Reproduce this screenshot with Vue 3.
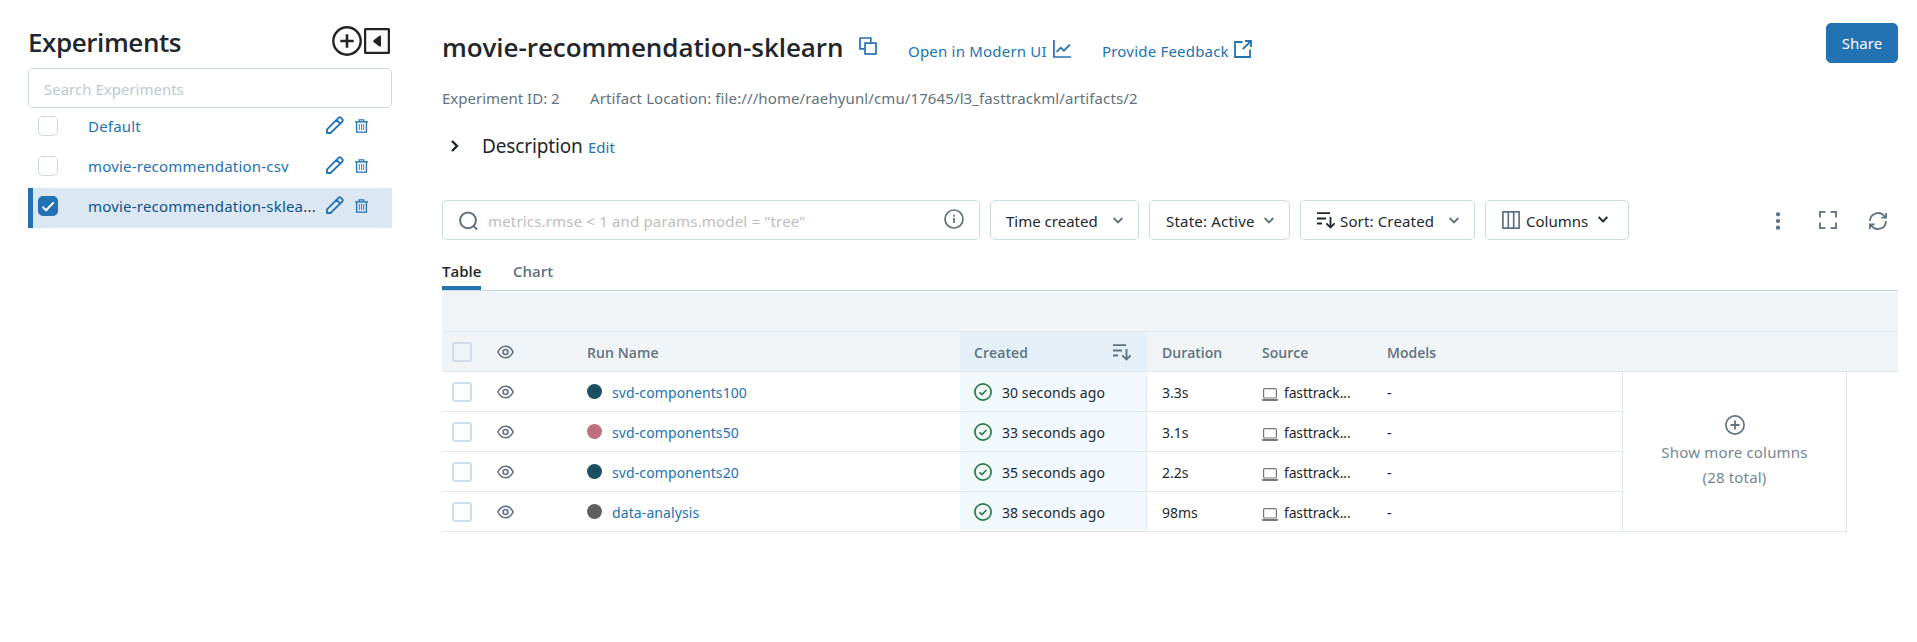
<script setup>
import { ref } from 'vue'

const experiments = ref([
  { name: 'Default', active: false },
  { name: 'movie-recommendation-csv', active: false },
  { name: 'movie-recommendation-sklea', active: true },
])

const runs = [
  { name: 'svd-components100', color: '#1b5063', created: '30 seconds ago', duration: '3.3s' },
  { name: 'svd-components50', color: '#bf6e80', created: '33 seconds ago', duration: '3.1s' },
  { name: 'svd-components20', color: '#1b5063', created: '35 seconds ago', duration: '2.2s' },
  { name: 'data-analysis', color: '#606060', created: '38 seconds ago', duration: '98ms' },
]
</script>

<template>
  <div class="page">
    <aside class="sidebar">
      <header class="side-head">
        <h2>Experiments</h2>
        <svg class="add" width="30" height="30" viewBox="0 0 30 30" fill="none" stroke="#232323">
          <circle cx="15" cy="15" r="13.7" stroke-width="2.4" />
          <path d="M15 8.3v13.4M8.3 15h13.4" stroke-width="2.6" />
        </svg>
        <svg class="collapse" width="26" height="26" viewBox="0 0 26 26">
          <rect x="1.1" y="1.1" width="23.8" height="23.8" rx=".6" fill="none" stroke="#232323" stroke-width="2.3" />
          <path d="M9.6 12.2l5.400-4.300q2-1 2 1v8.400q0 2-2 1l-5.400-4.300q-1-.9 0-1.800z" fill="#232323" />
        </svg>
      </header>
      <div class="side-search">Search Experiments</div>
      <ul class="exp-list">
        <li v-for="e in experiments" :key="e.name" :class="{ active: e.active }">
          <span class="box" :class="{ on: e.active }">
            <svg v-if="e.active" width="20" height="20" viewBox="0 0 20 20" fill="none" stroke="#fff" stroke-width="2"><path d="M4.500 10.800l3.600 3.500 7.600-7.900" /></svg>
          </span>
          <span class="exp-name"><span>{{ e.name }}</span><i v-if="e.active">...</i></span>
          <svg class="pencil" width="18" height="18" viewBox="0 0 18 18" fill="none" stroke="#2272b4" stroke-width="1.800" stroke-linejoin="round">
            <path d="M1 17v-3.600L12.700 1.600q1-1 2 0l1.700 1.700q1 1 0 2L4.600 17zM10.500 3.900l3.600 3.600" />
          </svg>
          <svg class="trash" width="13" height="14" viewBox="0 0 13 14" fill="none" stroke="#2272b4">
            <path d="M0 2.900h13" stroke-width="1.400" /><path d="M4.200 2.500V.8h4.600v1.700M1.600 3.300v9.900h9.800V3.300" stroke-width="1.300" />
            <path d="M4.300 5v6M6.500 5v6M8.700 5v6" stroke-width=".9" />
          </svg>
        </li>
      </ul>
    </aside>

    <main class="main">
      <header class="head">
        <h1>movie-recommendation-sklearn</h1>
        <svg class="copy" width="18" height="18" viewBox="0 0 18 18" fill="none" stroke="#2272b4" stroke-width="1.700">
          <path d="M5.500 11.800H1V1h10.800v4.500" /><rect x="6.100" y="6.100" width="10.900" height="10.900" />
        </svg>
        <a class="modern">Open in Modern UI</a>
        <svg class="chart" width="18" height="18" viewBox="0 0 18 18" fill="none" stroke="#2272b4" stroke-width="1.700">
          <path d="M.9 0v17H18M3.600 11.800l4.200-4.200 3.100 3.100 6-6" />
        </svg>
        <a class="feedback">Provide Feedback</a>
        <svg class="ext" width="18" height="18" viewBox="0 0 18 18" fill="none" stroke="#2272b4" stroke-width="1.800">
          <path d="M8.500 2H1v15h15V9.500M11 1h6v6M17 1L8.800 9.200" />
        </svg>
        <button class="share">Share</button>
      </header>
      <div class="meta"><span class="eid">Experiment ID: 2</span><span class="loc">Artifact Location: file:///home/raehyunl/cmu/17645/l3_fasttrackml/artifacts/2</span></div>
      <div class="desc">
        <svg width="8" height="12" viewBox="0 0 8 12" fill="none" stroke="#1f272d" stroke-width="2.400"><path d="M1 1l5 5-5 5" /></svg>
        <span class="dlabel">Description</span><a>Edit</a>
      </div>

      <div class="tools">
        <div class="query">
          <svg width="19" height="20" viewBox="0 0 19 20" fill="none" stroke="#5f7281" stroke-width="2"><circle cx="9" cy="9.300" r="7.900" /><path d="M14 14.500l4 4" /></svg>
          <span>metrics.rmse &lt; 1 and params.model = "tree"</span>
          <svg class="info" width="20" height="20" viewBox="0 0 20 20" fill="none" stroke="#5f7281" stroke-width="1.700"><circle cx="10" cy="10" r="9" /><path d="M10 9v5M10 5.800v1.900" /></svg>
        </div>
        <button class="t1"><span>Time created</span><svg class="chev" viewBox="0 0 10 7"><path d="M.7 1l4.300 4.300L9.300 1" /></svg></button>
        <button class="t2"><span>State: Active</span><svg class="chev" viewBox="0 0 10 7"><path d="M.7 1l4.300 4.300L9.300 1" /></svg></button>
        <button class="t3">
          <svg class="sort" viewBox="0 0 18 17"><path d="M0 1.200h13M0 6.500h9M0 11.500h5M13.500 5v10.500M9.300 11.300l4.200 4.200 4.200-4.200" /></svg>
          <span>Sort: Created</span><svg class="chev" viewBox="0 0 10 7"><path d="M.7 1l4.300 4.300L9.300 1" /></svg>
        </button>
        <button class="t4">
          <svg class="cols" width="18" height="18" viewBox="0 0 18 18" fill="none" stroke="#5f7281" stroke-width="1.700"><path d="M.9.9h16.200v16.200H.9zM6.300 1v16M11.700 1v16" /></svg>
          <span>Columns</span><svg class="chev dark" viewBox="0 0 10 7"><path d="M.7 1l4.300 4.300L9.300 1" /></svg>
        </button>
        <div class="right-icons">
          <svg width="4" height="18" viewBox="0 0 4 18" fill="#5f7281"><circle cx="2" cy="2.300" r="2.100" /><circle cx="2" cy="9" r="2.100" /><circle cx="2" cy="15.700" r="2.100" /></svg>
          <svg width="18" height="18" viewBox="0 0 18 18" fill="none" stroke="#5f7281" stroke-width="1.800"><path d="M.9 6.500V.9h5.600M11.500.9h5.600v5.600M17.100 11.500v5.600h-5.600M6.500 17.100H.9v-5.600" /></svg>
          <svg class="sync" width="18" height="18" viewBox="0 0 18 18" fill="none" stroke="#5f7281" stroke-width="1.800"><path d="M1 9a8 8 0 0 1 15-3.800M17.100 1v4.700h-4.700M17 9A8 8 0 0 1 2 12.800M.9 17v-4.700h4.700" /></svg>
        </div>
      </div>

      <nav class="tabs"><a class="sel">Table</a><a class="chart-tab">Chart</a></nav>

      <section class="grid">
        <div class="band"></div>
        <div class="row hrow">
          <div class="c-check"><span class="cb"></span></div>
          <div class="c-eye"><svg class="eye" viewBox="0 0 18 14"><path d="M.9 7Q4 .9 9 .9T17.100 7Q14 13.100 9 13.100T.9 7z" /><circle cx="9" cy="7" r="2.600" /></svg></div>
          <div class="c-name"><span class="h-run">Run Name</span></div>
          <div class="c-created"><span class="h-created">Created</span><svg class="sort" viewBox="0 0 18 17"><path d="M0 1.200h13M0 6.500h9M0 11.500h5M13.500 5v10.500M9.300 11.300l4.200 4.200 4.200-4.200" /></svg></div>
          <div class="c-dur">Duration</div>
          <div class="c-src"><span>Source</span></div>
          <div class="c-mod">Models</div>
        </div>
        <div class="body">
          <div class="rows">
            <div v-for="r in runs" :key="r.name" class="row">
              <div class="c-check"><span class="cb"></span></div>
              <div class="c-eye"><svg class="eye" viewBox="0 0 18 14"><path d="M.9 7Q4 .9 9 .9T17.100 7Q14 13.100 9 13.100T.9 7z" /><circle cx="9" cy="7" r="2.600" /></svg></div>
              <div class="c-name"><span class="dot" :style="{ background: r.color }"></span><a>{{ r.name }}</a></div>
              <div class="c-created">
                <svg class="ok" width="18" height="18" viewBox="0 0 18 18" fill="none" stroke="#277c43" stroke-width="1.700"><circle cx="9" cy="9" r="8.100" /><path d="M5.500 9.300l2.400 2.300 4.600-4.600" /></svg>
                <span>{{ r.created }}</span>
              </div>
              <div class="c-dur">{{ r.duration }}</div>
              <div class="c-src">
                <svg width="16" height="13" viewBox="0 0 16 13"><rect x="1.600" y=".6" width="12.800" height="9.400" rx="1" fill="none" stroke="#777" stroke-width="1.200" /><path d="M0 11h16v1q0 1-1 1H1q-1 0-1-1z" fill="#777" /></svg>
                <span class="src-name">fasttrack...</span>
              </div>
              <div class="c-mod">-</div>
            </div>
          </div>
          <div class="more">
            <svg width="20" height="20" viewBox="0 0 20 20" fill="none" stroke="#5f7281" stroke-width="1.700"><circle cx="10" cy="10" r="9.100" /><path d="M10 5.500v9M5.500 10h9" stroke-width="1.800" /></svg>
            <span class="m1">Show more columns</span>
            <span class="m2">(28 total)</span>
          </div>
        </div>
      </section>
    </main>
  </div>
</template>

<style>
body { margin: 0; background: #fff; }
</style>

<style scoped>
* { box-sizing: border-box; }
.page { display: flex; width: 1917px; height: 642px; overflow: hidden; font: 15px/20px "Noto Sans", "Open Sans", sans-serif; color: #1f272d; white-space: nowrap; }
svg { display: block; flex: none; }
h1, h2 { margin: 0; font-weight: 600; font-family: "Open Sans", "Noto Sans", sans-serif; }
a { color: #2272b4; }
button { font: inherit; color: inherit; background: #fff; border: 1px solid #cbd9e4; border-radius: 5px; height: 40px; padding: 0; display: flex; align-items: center; }
.sidebar { width: 392px; padding: 0 0 0 28px; flex: none; }
.side-head { display: flex; height: 68px; padding: 26px 2px 0 0; }
h2 { font-size: 26px; line-height: 32px; width: 304px; letter-spacing: -.42px; }
.collapse { margin: 2px 0 0 2px; }
.side-search { height: 40px; border: 1px solid #cbd9e4; border-radius: 5px; padding: 10px 15px; color: #bdcad5; line-height: 20px; }
.exp-list { list-style: none; margin: 0; padding: 0; }
.exp-list li { display: flex; height: 40px; padding: 8px 0 0 10px; }
.exp-list li.active { background: #dbe7f3; border-left: 5px solid #2272b4; padding-left: 5px; }
.box { width: 20px; height: 20px; border: 1px solid #cbd9e4; border-radius: 5px; background: #fff; flex: none; }
.box.on { background: #2272b4; border: 0; }
.exp-name { width: 238px; margin-left: 30px; color: #2272b4; letter-spacing: .2px; }
.exp-name i { font-style: normal; color: #333; }
.active .exp-name { color: #0e538b; }
.trash { margin: 3px 0 0 11px; }

.main { margin-left: 50px; width: 1456px; flex: none; }
.head { display: flex; height: 86px; padding-top: 23px; }
h1 { font-size: 26px; line-height: 48px; width: 417px; letter-spacing: -.07px; }
.copy { margin-top: 14px; }
.modern { width: 145px; margin: 18px 0 0 31px; letter-spacing: .2px; }
.chart { margin-top: 17px; }
.feedback { width: 132px; margin: 18px 0 0 31px; letter-spacing: .2px; }
.ext { margin-top: 17px; }
.share { width: 72px; margin-left: auto; justify-content: center; color: #fff; background: #2272b4; border-color: #2272b4; }
.meta { display: flex; height: 46px; padding-top: 1px; color: #5f7281; line-height: 22px; }
.eid { width: 148px; }
.loc { letter-spacing: .11px; }
.desc { display: flex; height: 68px; padding-top: 1px; }
.desc svg { margin: 7px 23px 0 9px; }
.dlabel { font-size: 19px; line-height: 26px; width: 106px; letter-spacing: -.15px; }
.desc a { line-height: 29px; }
.tools { display: flex; gap: 10px; height: 40px; }
.query { width: 538px; border: 1px solid #cbd9e4; border-radius: 5px; display: flex; padding: 10px 15px 0 16px; color: #bdbdbd; letter-spacing: .17px; }
.query span { margin: 0 0 0 10px; }
.info { margin: -2px 0 0 auto; }
.t1 { width: 149px; padding-left: 15px; }
.t2 { width: 141px; padding-left: 16px; letter-spacing: .2px; }
.t3 { width: 175px; padding-left: 16px; letter-spacing: .15px; }
.t4 { width: 144px; padding-left: 16px; }
.tools button span { padding-top: 1px; }
.chev { width: 10px; height: 7px; fill: none; stroke: #5f7281; stroke-width: 1.9; margin: 1px 15px 0 auto; }
.t4 .chev { margin: -1px 20px 0 auto; stroke: #1f272d; }
.sort { width: 18px; height: 17px; fill: none; stroke: currentColor; stroke-width: 1.8; }
.t3 .sort { margin-right: 5px; margin-top: 1px; }
.cols { margin-right: 6px; }
.right-icons { display: flex; margin: 11px 11px 0 auto; gap: 32px; }
.right-icons svg:first-child { margin: 1px 7px 0 0; }
.sync { margin-top: 1px; }
.tabs { display: flex; height: 51px; border-bottom: 1px solid #cbd9e4; font-weight: 600; font-family: "Open Sans", sans-serif; font-size: 15px; padding-top: 20px; }
.tabs a { color: #5f7281; line-height: 22px; }
.tabs .sel { color: #1f272d; width: 39px; height: 30px; border-bottom: 4px solid #2272b4; }
.chart-tab { margin-left: 32px; }
.grid { font-size: 14px; }
.band { height: 41px; background: #f0f4f7; border-bottom: 1px solid #e2eaf0; }
.row { display: flex; height: 40px; border-bottom: 1px solid #e0e8ed; }
.row > div { display: flex; align-items: center; height: 39px; flex: none; }
.hrow { background: #f0f4f7; color: #5f7281; font-weight: 600; font-family: "Open Sans", sans-serif; }
.c-check { width: 55px; padding-left: 10px; }
.cb { width: 20px; height: 20px; border: 2px solid #d1dde8; border-radius: 3px; }
.c-eye { width: 90px; }
.eye { width: 17px; height: 14px; fill: none; stroke: #5f7281; stroke-width: 1.7; }
.c-name { width: 373px; letter-spacing: .1px; }
.dot { width: 15px; height: 15px; border-radius: 50%; margin-right: 10px; }
.row .c-created { width: 187px; padding-left: 14px; background: #f1f8fe; border-right: 1px solid #dfe8ef; letter-spacing: .07px; }
.row.hrow .c-created { background: #e4eff8; border-right: 0; padding-right: 16px; justify-content: space-between; }
.hrow .sort { margin-top: 2px; }
.ok { margin-right: 10px; }
.c-dur { width: 100px; padding-left: 15px; }
.c-src { width: 125px; padding-left: 15px; }
.c-src svg { margin: 5px 6px 0 0; }
.src-name { letter-spacing: -.15px; }
.c-mod { padding-left: 15px; }
.row > div > a, .row > div > span:not(.cb):not(.dot), .c-dur, .c-mod { padding-top: 2px; }
.body { display: flex; }
.rows { width: 1180px; }
.more { width: 225px; height: 160px; border: 1px solid #dfe8ef; border-top: 0; display: flex; flex-direction: column; align-items: center; padding-top: 43px; color: #728696; font-size: 15px; line-height: 25px; letter-spacing: .18px; }
.m1 { margin-top: 5px; }
</style>
